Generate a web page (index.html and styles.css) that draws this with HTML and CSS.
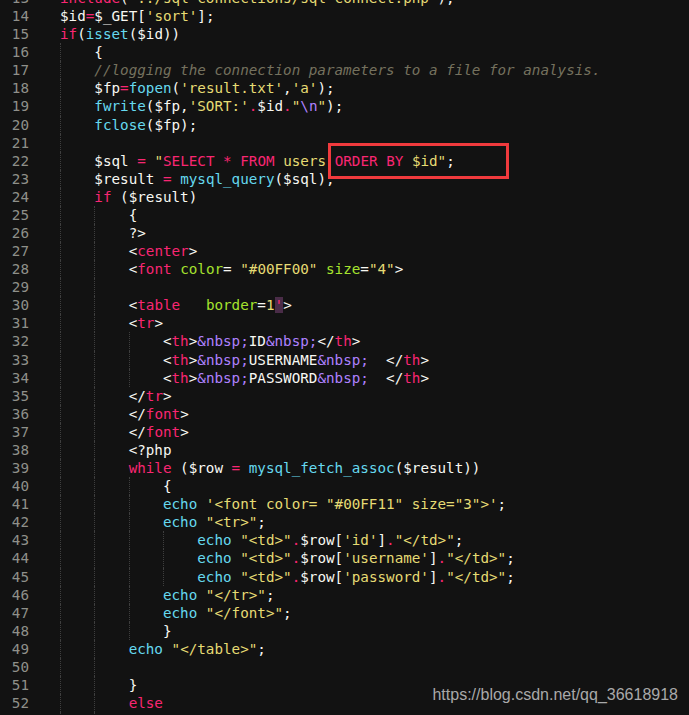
FILE: index.html
```html
<!DOCTYPE html>
<html lang="en">
<head>
    <meta charset="UTF-8">
    <meta name="viewport" content="width=device-width, initial-scale=1.0">
    <title>sort.php</title>
    <link rel="stylesheet" href="styles.css">
</head>
<body>
    <div class="editor">
        <div class="gutter">
            <div>13</div><div>14</div><div>15</div><div>16</div><div>17</div><div>18</div>
            <div>19</div><div>20</div><div>21</div><div>22</div><div>23</div><div>24</div>
            <div>25</div><div>26</div><div>27</div><div>28</div><div>29</div><div>30</div>
            <div>31</div><div>32</div><div>33</div><div>34</div><div>35</div><div>36</div>
            <div>37</div><div>38</div><div>39</div><div>40</div><div>41</div><div>42</div>
            <div>43</div><div>44</div><div>45</div><div>46</div><div>47</div><div>48</div>
            <div>49</div><div>50</div><div>51</div><div>52</div><div>53</div>
        </div>
        <div class="code">
<div class="ln"><span class="k">include</span>(<span class="s">'../sql-connections/sql-connect.php'</span>);</div>
<div class="ln">$id<span class="k">=</span>$_GET[<span class="s">'sort'</span>];</div>
<div class="ln"><span class="k">if</span>(<span class="f">isset</span>($id))</div>
<div class="ln"><span class="g"></span>{</div>
<div class="ln"><span class="g"></span><span class="c">//logging the connection parameters to a file for analysis.</span></div>
<div class="ln"><span class="g"></span>$fp<span class="k">=</span><span class="f">fopen</span>(<span class="s">'result.txt'</span>,<span class="s">'a'</span>);</div>
<div class="ln"><span class="g"></span><span class="f">fwrite</span>($fp,<span class="s">'SORT:'</span><span class="k">.</span>$id<span class="k">.</span><span class="s">"<span class="n">\n</span>"</span>);</div>
<div class="ln"><span class="g"></span><span class="f">fclose</span>($fp);</div>
<div class="ln"><span class="g"></span></div>
<div class="ln"><span class="g"></span>$sql <span class="k">=</span> <span class="s">"<span class="k">SELECT</span> <span class="k">*</span> <span class="k">FROM</span> users <span class="k">ORDER BY</span> $id"</span>;</div>
<div class="ln"><span class="g"></span>$result <span class="k">=</span> <span class="f">mysql_query</span>($sql);</div>
<div class="ln"><span class="g"></span><span class="k">if</span> ($result)</div>
<div class="ln"><span class="g"></span><span class="g"></span>{</div>
<div class="ln"><span class="g"></span><span class="g"></span>?&gt;</div>
<div class="ln"><span class="g"></span><span class="g"></span>&lt;<span class="k">center</span>&gt;</div>
<div class="ln"><span class="g"></span><span class="g"></span>&lt;<span class="k">font</span> <span class="a">color</span>= <span class="s">"#00FF00"</span> <span class="a">size</span>=<span class="s">"4"</span>&gt;</div>
<div class="ln"><span class="g"></span><span class="g"></span></div>
<div class="ln"><span class="g"></span><span class="g"></span>&lt;<span class="k">table</span>   <span class="a">border</span>=<span class="s">1</span><span class="bad">'</span>&gt;</div>
<div class="ln"><span class="g"></span><span class="g"></span>&lt;<span class="k">tr</span>&gt;</div>
<div class="ln"><span class="g"></span><span class="g"></span><span class="g"></span>&lt;<span class="k">th</span>&gt;<span class="n">&amp;nbsp;</span>ID<span class="n">&amp;nbsp;</span>&lt;/<span class="k">th</span>&gt;</div>
<div class="ln"><span class="g"></span><span class="g"></span><span class="g"></span>&lt;<span class="k">th</span>&gt;<span class="n">&amp;nbsp;</span>USERNAME<span class="n">&amp;nbsp;</span>  &lt;/<span class="k">th</span>&gt;</div>
<div class="ln"><span class="g"></span><span class="g"></span><span class="g"></span>&lt;<span class="k">th</span>&gt;<span class="n">&amp;nbsp;</span>PASSWORD<span class="n">&amp;nbsp;</span>  &lt;/<span class="k">th</span>&gt;</div>
<div class="ln"><span class="g"></span><span class="g"></span>&lt;/<span class="k">tr</span>&gt;</div>
<div class="ln"><span class="g"></span><span class="g"></span>&lt;/<span class="k">font</span>&gt;</div>
<div class="ln"><span class="g"></span><span class="g"></span>&lt;/<span class="k">font</span>&gt;</div>
<div class="ln"><span class="g"></span><span class="g"></span>&lt;?php</div>
<div class="ln"><span class="g"></span><span class="g"></span><span class="k">while</span> ($row <span class="k">=</span> <span class="f">mysql_fetch_assoc</span>($result))</div>
<div class="ln"><span class="g"></span><span class="g"></span><span class="g"></span>{</div>
<div class="ln"><span class="g"></span><span class="g"></span><span class="g"></span><span class="f">echo</span> <span class="s">'&lt;font color= "#00FF11" size="3"&gt;'</span>;</div>
<div class="ln"><span class="g"></span><span class="g"></span><span class="g"></span><span class="f">echo</span> <span class="s">"&lt;tr&gt;"</span>;</div>
<div class="ln"><span class="g"></span><span class="g"></span><span class="g"></span><span class="g"></span><span class="f">echo</span> <span class="s">"&lt;td&gt;"</span><span class="k">.</span>$row[<span class="s">'id'</span>]<span class="k">.</span><span class="s">"&lt;/td&gt;"</span>;</div>
<div class="ln"><span class="g"></span><span class="g"></span><span class="g"></span><span class="g"></span><span class="f">echo</span> <span class="s">"&lt;td&gt;"</span><span class="k">.</span>$row[<span class="s">'username'</span>]<span class="k">.</span><span class="s">"&lt;/td&gt;"</span>;</div>
<div class="ln"><span class="g"></span><span class="g"></span><span class="g"></span><span class="g"></span><span class="f">echo</span> <span class="s">"&lt;td&gt;"</span><span class="k">.</span>$row[<span class="s">'password'</span>]<span class="k">.</span><span class="s">"&lt;/td&gt;"</span>;</div>
<div class="ln"><span class="g"></span><span class="g"></span><span class="g"></span><span class="f">echo</span> <span class="s">"&lt;/tr&gt;"</span>;</div>
<div class="ln"><span class="g"></span><span class="g"></span><span class="g"></span><span class="f">echo</span> <span class="s">"&lt;/font&gt;"</span>;</div>
<div class="ln"><span class="g"></span><span class="g"></span><span class="g"></span>}</div>
<div class="ln"><span class="g"></span><span class="g"></span><span class="f">echo</span> <span class="s">"&lt;/table&gt;"</span>;</div>
<div class="ln"><span class="g"></span><span class="g"></span></div>
<div class="ln"><span class="g"></span><span class="g"></span>}</div>
<div class="ln"><span class="g"></span><span class="g"></span><span class="k">else</span></div>
<div class="ln"><span class="g"></span><span class="g"></span>{</div>
        </div>
    </div>
    <!-- marca em volta da parte injetável -->
    <div class="destaque"></div>
    <div class="marca">https://blog.csdn.net/qq_36618918</div>
</body>
</html>
```

FILE: styles.css
```css
body {
    margin: 0;
    padding: 0;
    background-color: #121212;
    height: 715px;
    overflow: hidden;
    position: relative;
}

.editor {
    display: flex;
    margin-top: -11px;
    font-family: "DejaVu Sans Mono", monospace;
    font-size: 14.25px;
    line-height: 18.08px;
    color: #f8f8f2;
}

.gutter {
    width: 29px;
    padding-right: 31px;
    text-align: right;
    color: #8f908a;
}

.gutter div {
    height: 18.08px;
}

.ln {
    height: 18.08px;
    white-space: pre;
}

/* guias de indentação */
.g {
    display: inline-block;
    width: 4ch;
    height: 18.08px;
    vertical-align: top;
    box-sizing: border-box;
    border-left: 1px dotted #3e3e3e;
}

.k { color: #f92672; }
.f { color: #66d9ef; }
.s { color: #e6db74; }
.a { color: #a6e22e; }
.n { color: #ae81ff; }
.c { color: #75715e; font-style: italic; }

.bad {
    color: #f92672;
    background-color: #4a2c48;
}

.destaque {
    position: absolute;
    left: 328px;
    top: 143px;
    width: 181px;
    height: 36px;
    box-sizing: border-box;
    border: 3px solid #f03a3d;
}

.marca {
    position: absolute;
    right: 11px;
    top: 686px;
    font-family: "Liberation Sans", Arial, sans-serif;
    font-size: 16px;
    line-height: 18px;
    color: #a9a9a9;
}
```
